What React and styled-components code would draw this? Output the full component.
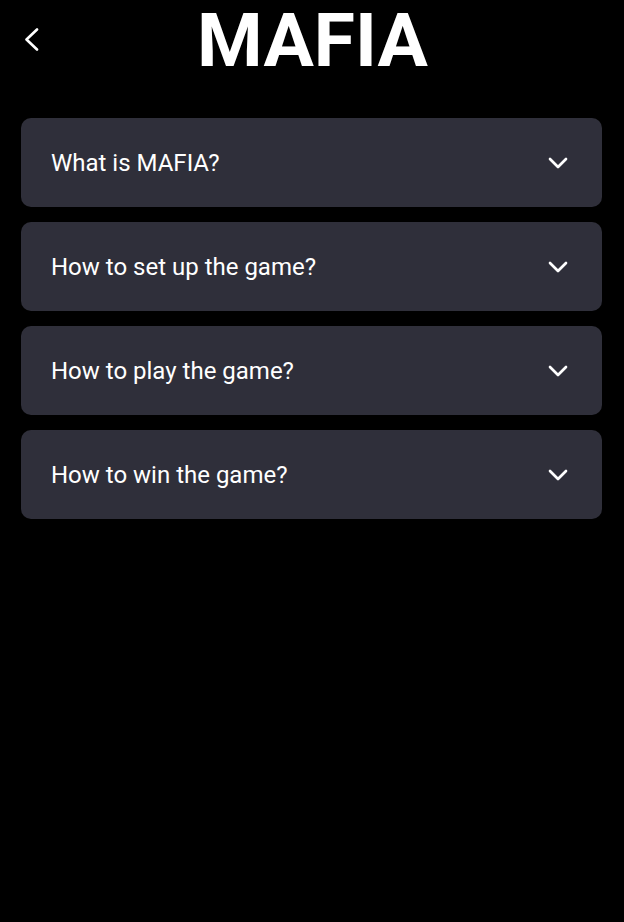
import React from "react";
import styled, { createGlobalStyle } from "styled-components";

const GlobalStyle = createGlobalStyle`
  html, body {
    margin: 0;
    padding: 0;
    background: #000;
    font-family: Roboto, "Liberation Sans", sans-serif;
    color: #fff;
  }
  * { box-sizing: border-box; }
`;

const Page = styled.div`
  min-height: 922px;
  background: #000;
  padding: 0 22px 0 21px;
`;

const Header = styled.header`
  display: grid;
  grid-template-columns: 1fr auto 1fr;
  align-items: center;
  height: 80px;
`;

const BackButton = styled.button`
  justify-self: start;
  display: flex;
  align-items: center;
  justify-content: center;
  width: 16px;
  height: 30px;
  margin-left: 4px;
  margin-top: -1px;
  padding: 0;
  background: none;
  border: none;
  color: #fff;
  cursor: pointer;
`;

const Title = styled.h1`
  margin: 0;
  font-family: Roboto, "Liberation Sans", sans-serif;
  font-weight: 700;
  font-size: 75px;
  line-height: 80px;
  letter-spacing: 0;
  color: #fff;
  transform: translateX(1px);
`;

const List = styled.div`
  display: flex;
  flex-direction: column;
  gap: 15px;
  margin-top: 38px;
`;

const Item = styled.button`
  display: flex;
  align-items: center;
  justify-content: space-between;
  height: 89px;
  padding: 0 28px 0 30px;
  background: #2f2f3a;
  border: none;
  border-radius: 10px;
  color: #fff;
  font-family: Roboto, "Liberation Sans", sans-serif;
  font-size: 24px;
  font-weight: 400;
  text-align: left;
  cursor: pointer;
`;

const Chevron = styled.svg`
  flex: none;
  width: 32px;
  height: 32px;
`;

const items = [
  "What is MAFIA?",
  "How to set up the game?",
  "How to play the game?",
  "How to win the game?",
];

export default function App() {
  return (
    <>
      <GlobalStyle />
      <Page>
        <Header>
          <BackButton aria-label="Back">
            <svg width="16" height="26" viewBox="0 0 16 26" fill="none">
              <polyline
                points="12,2.5 1.5,12.5 12,22.5"
                stroke="#fff"
                strokeWidth="2.6"
                strokeLinecap="round"
                strokeLinejoin="round"
              />
            </svg>
          </BackButton>
          <Title>MAFIA</Title>
          <span />
        </Header>
        <List>
          {items.map((t) => (
            <Item key={t}>
              <span>{t}</span>
              <Chevron viewBox="0 0 24 24" fill="none">
                <path
                  d="m6 9 6 6 6-6"
                  stroke="#fff"
                  strokeWidth="2"
                  strokeLinecap="round"
                  strokeLinejoin="round"
                />
              </Chevron>
            </Item>
          ))}
        </List>
      </Page>
    </>
  );
}
